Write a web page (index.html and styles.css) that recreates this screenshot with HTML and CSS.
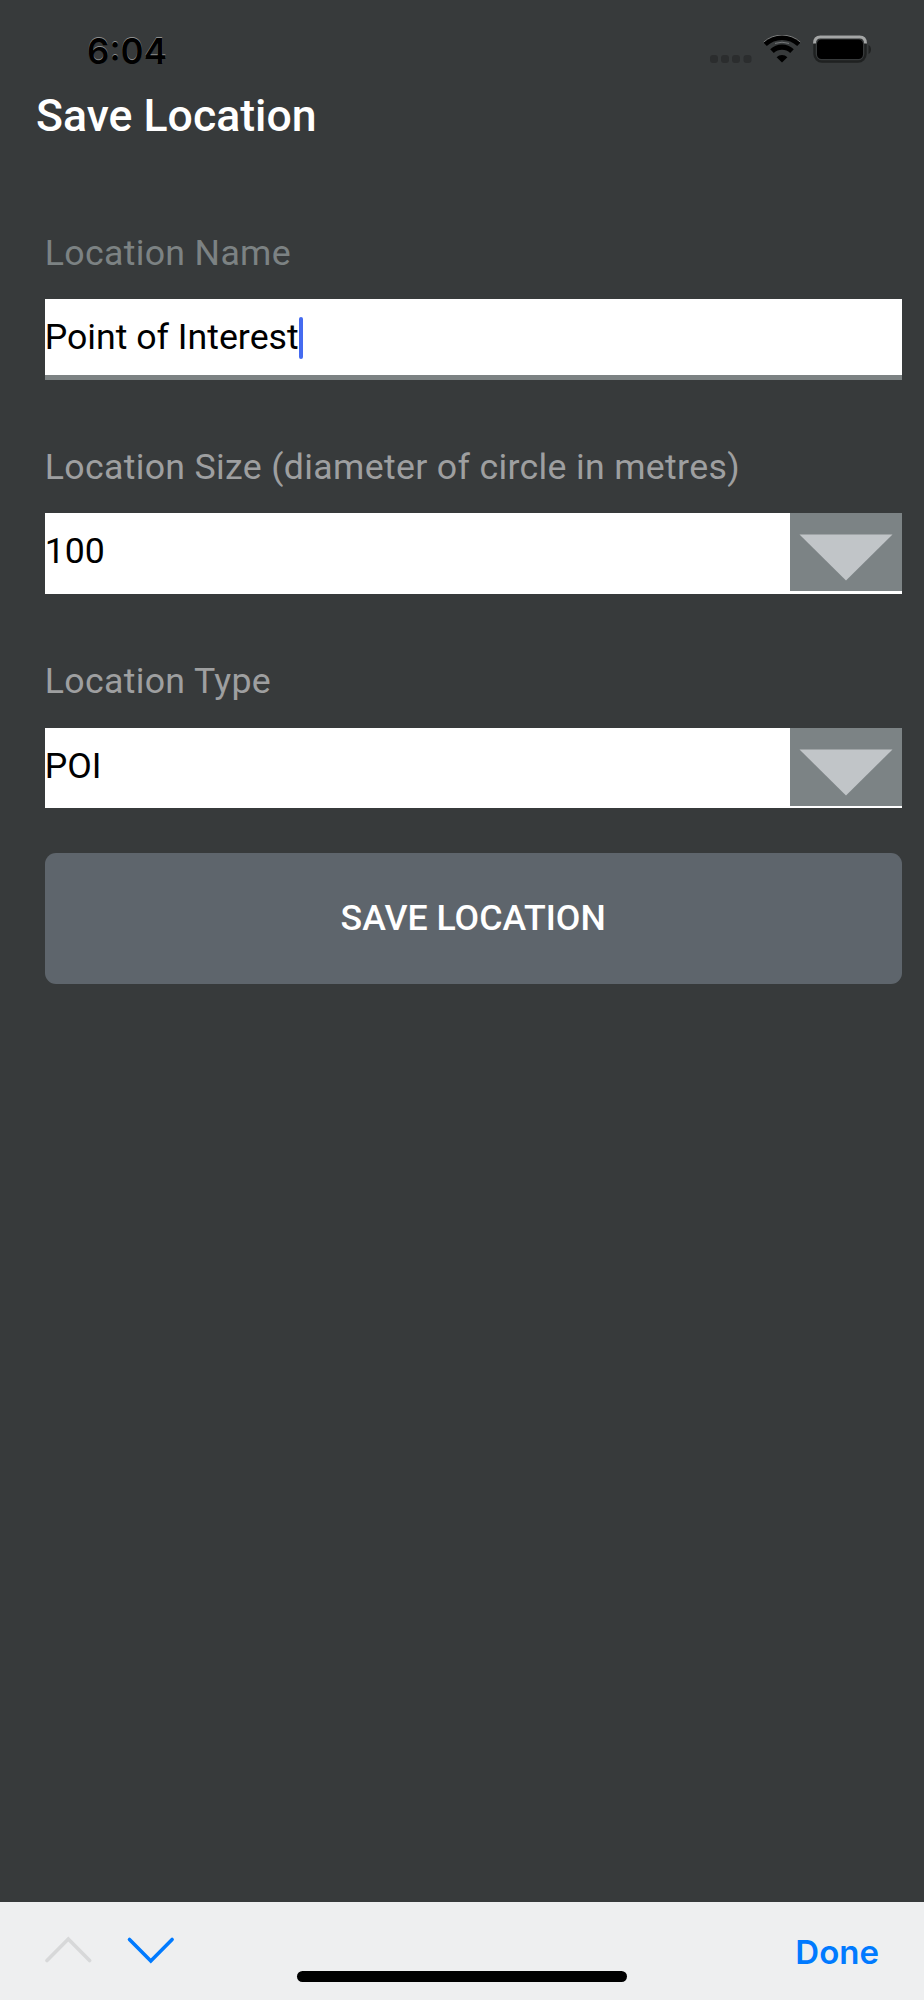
FILE: index.html
```html
<!DOCTYPE html>
<html lang="en">
<head>
<meta charset="utf-8">
<title>Save Location</title>
<link rel="stylesheet" href="styles.css">
</head>
<body>
<div class="screen">
  <header class="status">
    <span class="time">6:04</span>
    <svg class="status-icons" width="166" height="32" viewBox="0 0 166 32">
      <g fill="#2b2d2e">
        <rect x="0" y="20" width="8" height="8" rx="3"/>
        <rect x="11" y="20" width="8" height="8" rx="3"/>
        <rect x="22" y="20" width="8" height="8" rx="3"/>
        <rect x="33.500" y="20" width="8" height="8" rx="3"/>
      </g>
      <g fill="none" stroke="#000" stroke-width="5.200">
        <path d="M55 9.200A24.500 24.500 0 0 1 89 9.200"/>
        <path d="M62 16.200A14.500 14.500 0 0 1 82 16.200"/>
      </g>
      <path d="M72 27.500L66.600 22.200A7.800 7.800 0 0 1 77.400 22.200Z"/>
      <path d="M53.500 7.200A27.500 27.500 0 0 1 90.500 7.200" fill="none" stroke="#9b9d9d" stroke-width=".8"/>
      <path d="M65 8.400A22 22 0 0 1 79 8.400" fill="none" stroke="#85888a" stroke-width=".8"/>
      <rect x="104.500" y="2" width="51" height="24.500" rx="7.500" fill="none" stroke="#1f2121" stroke-width="2.400"/>
      <path d="M104.500 8.500C104.500 4 107 2 110.500 2H149.500C153 2 155.500 4 155.500 8.500" fill="none" stroke="#a4a6a6" stroke-width="3"/>
      <rect x="107" y="4.500" width="46" height="19.500" rx="4.500"/>
      <path d="M158.500 10C161.800 11.500 161.800 17.500 158.500 19Z" fill="#202222"/>
    </svg>
  </header>
  <h1 class="title">Save Location</h1>
  <main class="form">
    <label class="label label-active">Location Name</label>
    <div class="field field-active"><span class="value">Point of Interest</span><span class="caret"></span></div>
    <label class="label">Location Size (diameter of circle in metres)</label>
    <div class="field"><span class="value">100</span>
      <svg class="drop" viewBox="0 0 112 78" preserveAspectRatio="none"><path d="M9.500 21.500H102.500L56 67.500Z"/></svg>
    </div>
    <label class="label">Location Type</label>
    <div class="field"><span class="value">POI</span>
      <svg class="drop" viewBox="0 0 112 78" preserveAspectRatio="none"><path d="M9.500 21.500H102.500L56 67.500Z"/></svg>
    </div>
    <button class="save">SAVE LOCATION</button>
  </main>
  <footer class="toolbar">
    <svg class="arrows" width="130" height="28" viewBox="0 0 130 28">
      <path d="M2 24.500L23.300 3L44.600 24.500" stroke="#d7d8d9"/>
      <path d="M84.500 3.500L105.800 25L127.100 3.500" stroke="#007aff"/>
    </svg>
    <div class="home"></div>
    <span class="done">Done</span>
  </footer>
</div>
</body>
</html>
```
FILE: styles.css
```css
* { box-sizing: border-box; }
body { margin: 0; background: #373a3b; font-family: Roboto, "Liberation Sans", sans-serif; }
.screen { width: 924px; height: 2000px; display: flex; flex-direction: column; overflow: hidden; }
.status { height: 90px; flex: none; display: flex; justify-content: space-between; padding: 30px 48px 0 87px; }
.time { font: 600 35px/42px Inter, "Liberation Sans", sans-serif; color: #000; text-shadow: 0 -0.6px 0.5px #8b8d8d; }
.status-icons { margin-top: 5px; }
.title { margin: 0; padding-left: 36px; height: 52px; color: #fff; font-size: 44.6px; font-weight: 500; line-height: 52px; white-space: nowrap; }
.form { display: flex; flex-direction: column; padding: 90px 22.4px 0 44.7px; font-size: 35.7px; }
.label { height: 42px; line-height: 42px; margin-bottom: 25.2px; color: #9e9fa0; white-space: nowrap; letter-spacing: .33px; }
.label-active { color: #7c8283; }
.field { height: 80.5px; margin-bottom: 66.5px; display: flex; align-items: flex-start; background: #fff; color: #000; }
.field-active { border-bottom: 5px solid #7c8283; }
.value { line-height: 77px; white-space: nowrap; }
.drop { width: 112px; height: 78px; margin-left: auto; background: #7c8385; fill: #c1c5c8; }
.caret { width: 4.500px; height: 42px; margin-top: 18px; border-radius: 2px; background: #456bf0; }
.save { height: 131.500px; margin-top: -22px; border: 0; border-radius: 11px; background: #5e656c; color: #fff; font: 500 35.7px Roboto, sans-serif; }
.toolbar { height: 98px; margin-top: auto; display: grid; grid-template-columns: 297px 330px 1fr; background: #eeeff0; }
.arrows { margin: 34px 0 0 45px; fill: none; stroke-width: 3.600; stroke-linecap: round; stroke-linejoin: miter; }
.home { height: 11px; margin-top: 69px; border-radius: 6px; background: #000; }
.done { justify-self: end; margin: 30px 45px 0 0; font: 600 33px/40px Inter, "Liberation Sans", sans-serif; color: #007aff; }
```
